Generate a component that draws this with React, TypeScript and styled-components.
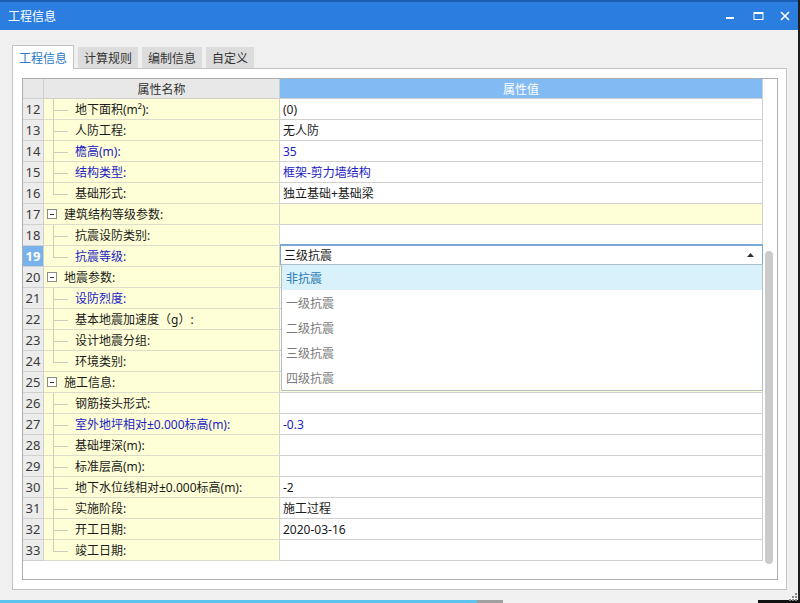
import styled, { createGlobalStyle } from "styled-components";

type Row = {
  no: number;
  label: string;
  value?: string;
  blue?: boolean;
  group?: boolean;
  last?: boolean;
  combo?: boolean;
};

const rows: Row[] = [
  { no: 12, label: "地下面积(m²):", value: "(0)" },
  { no: 13, label: "人防工程:", value: "无人防" },
  { no: 14, label: "檐高(m):", value: "35", blue: true },
  { no: 15, label: "结构类型:", value: "框架-剪力墙结构", blue: true },
  { no: 16, label: "基础形式:", value: "独立基础+基础梁", last: true },
  { no: 17, label: "建筑结构等级参数:", group: true },
  { no: 18, label: "抗震设防类别:" },
  { no: 19, label: "抗震等级:", blue: true, last: true, combo: true },
  { no: 20, label: "地震参数:", group: true },
  { no: 21, label: "设防烈度:", blue: true },
  { no: 22, label: "基本地震加速度（g）:" },
  { no: 23, label: "设计地震分组:" },
  { no: 24, label: "环境类别:", last: true },
  { no: 25, label: "施工信息:", group: true },
  { no: 26, label: "钢筋接头形式:" },
  { no: 27, label: "室外地坪相对±0.000标高(m):", value: "-0.3", blue: true },
  { no: 28, label: "基础埋深(m):" },
  { no: 29, label: "标准层高(m):" },
  { no: 30, label: "地下水位线相对±0.000标高(m):", value: "-2" },
  { no: 31, label: "实施阶段:", value: "施工过程" },
  { no: 32, label: "开工日期:", value: "2020-03-16" },
  { no: 33, label: "竣工日期:", last: true },
];

const options = ["非抗震", "一级抗震", "二级抗震", "三级抗震", "四级抗震"];
const tabs = ["工程信息", "计算规则", "编制信息", "自定义"];

const GlobalStyle = createGlobalStyle`
  html, body {
    margin: 0;
    padding: 0;
    background: #1e1e1e;
  }
  body {
    font-family: "Noto Sans", "Noto Sans CJK SC", sans-serif;
    font-size: 12px;
    color: #1a1a1a;
  }
  * {
    box-sizing: border-box;
  }
`;

const App = () => {
  return (
    <>
      <GlobalStyle />
      <Screen>
        <Window>
          <TitleBar>
            <Title>工程信息</Title>
            <Controls>
              <CtrlButton $w={28}>
                <svg width="10" height="10" viewBox="0 0 10 10">
                  <rect x="1" y="6" width="8" height="2" fill="#fff" />
                </svg>
              </CtrlButton>
              <CtrlButton $w={28}>
                <svg width="11" height="10" viewBox="0 0 11 10">
                  <rect x="1" y="1.5" width="9" height="7" fill="none" stroke="#fff" strokeWidth="1" />
                  <rect x="1" y="1" width="9" height="2" fill="#fff" />
                </svg>
              </CtrlButton>
              <CtrlButton $w={26}>
                <svg width="10" height="10" viewBox="0 0 10 10">
                  <path d="M1 1 L9 9 M9 1 L1 9" stroke="#fff" strokeWidth="1.6" />
                </svg>
              </CtrlButton>
            </Controls>
          </TitleBar>
          <Body>
            <TabStrip>
              {tabs.map((t, i) => (
                <Tab key={t} $active={i === 0}>
                  {t}
                </Tab>
              ))}
            </TabStrip>
            <Panel>
              <Grid>
                <Table>
                  <HeadCell />
                  <HeadCell>属性名称</HeadCell>
                  <HeadCell $blue>属性值</HeadCell>
                  {rows.map((r) => (
                    <RowView key={r.no} row={r} />
                  ))}
                </Table>
                <ScrollTrack>
                  <Thumb />
                </ScrollTrack>
              </Grid>
            </Panel>
          </Body>
          <Grip>
            <svg width="10" height="10" viewBox="0 0 10 10">
              {[
                [8, 0],
                [5, 3],
                [8, 3],
                [2, 6],
                [5, 6],
                [8, 6],
              ].map(([x, y]) => (
                <rect key={`${x}-${y}`} x={x} y={y + 2} width="2" height="2" fill="#8a8a8a" />
              ))}
            </svg>
          </Grip>
        </Window>
        <BottomEdge />
      </Screen>
    </>
  );
};

const RowView = ({ row }: { row: Row }) => {
  return (
    <>
      <NumCell $active={row.combo}>{row.no}</NumCell>
      <NameCell>
        {row.group ? <MinusBox /> : <Branch $last={row.last} />}
        <Label $blue={row.blue}>{row.label}</Label>
      </NameCell>
      <ValueCell $group={row.group} $blue={row.blue}>
        {row.combo ? (
          <Combo>
            <ComboText>三级抗震</ComboText>
            <svg width="7" height="4" viewBox="0 0 7 4">
              <path d="M0 4 L3.5 0 L7 4 Z" fill="#333" />
            </svg>
            <DropList>
              {options.map((o, i) => (
                <Option key={o} $selected={i === 0}>
                  {o}
                </Option>
              ))}
            </DropList>
          </Combo>
        ) : (
          row.value
        )}
      </ValueCell>
    </>
  );
};

const Screen = styled.div`
  width: 800px;
  height: 603px;
  display: flex;
  flex-direction: column;
  overflow: hidden;
`;

const Window = styled.div`
  position: relative;
  width: 798px;
  height: 600px;
  background: #f0f0f0;
  display: flex;
  flex-direction: column;
`;

const TitleBar = styled.div`
  height: 30px;
  flex: none;
  border-top: 2px solid #1c5db4;
  background: #2b7ee0;
  display: flex;
  align-items: center;
  padding-left: 8px;
`;

const Title = styled.div`
  color: #fff;
  font-size: 12px;
  flex: 1;
`;

const Controls = styled.div`
  display: flex;
  height: 100%;
`;

const CtrlButton = styled.div<{ $w: number }>`
  width: ${(p) => p.$w}px;
  display: flex;
  align-items: center;
  justify-content: center;
`;

const Body = styled.div`
  flex: 1;
  display: flex;
  flex-direction: column;
  padding: 15px 11px 10px 12px;
`;

const TabStrip = styled.div`
  display: flex;
  align-items: flex-end;
  gap: 4px;
  height: 24px;
  position: relative;
  z-index: 1;
  margin-bottom: -1px;
`;

const Tab = styled.div<{ $active?: boolean }>`
  height: ${(p) => (p.$active ? "24px" : "21px")};
  padding: 0 ${(p) => (p.$active ? "6px" : "5px")};
  margin-bottom: ${(p) => (p.$active ? "0" : "1px")};
  display: flex;
  align-items: center;
  font-size: 12px;
  color: ${(p) => (p.$active ? "#2a78c8" : "#333")};
  background: ${(p) => (p.$active ? "#fff" : "#dcdcdc")};
  border: 1px solid ${(p) => (p.$active ? "#c4c4c4" : "transparent")};
  border-bottom: none;
`;

const Panel = styled.div`
  flex: 1;
  display: flex;
  background: #fff;
  border: 1px solid #c4c4c4;
  padding: 9px 8px 9px 9px;
`;

const Grid = styled.div`
  flex: 1;
  display: flex;
  border: 1px solid #adadad;
  background: #fff;
`;

const Table = styled.div`
  width: 740px;
  display: grid;
  grid-template-columns: 21px 236px 483px;
  grid-template-rows: 20px;
  grid-auto-rows: 21px;
  align-content: start;
`;

const HeadCell = styled.div<{ $blue?: boolean }>`
  display: flex;
  align-items: center;
  justify-content: center;
  background: ${(p) => (p.$blue ? "#82baf3" : "#e8e8e8")};
  color: ${(p) => (p.$blue ? "#fff" : "#333")};
  border-right: 1px solid #cfcfcf;
  border-bottom: 1px solid #cfcfcf;
  font-size: 12px;
`;

const NumCell = styled.div<{ $active?: boolean }>`
  display: flex;
  align-items: center;
  justify-content: center;
  font-family: "Noto Sans", sans-serif;
  font-size: 13px;
  font-weight: ${(p) => (p.$active ? 700 : 400)};
  color: ${(p) => (p.$active ? "#fff" : "#3a3a3a")};
  background: ${(p) => (p.$active ? "#78b2ec" : "#ececec")};
  border-right: 1px solid #d0d0d0;
  border-bottom: 1px solid #d0d0d0;
`;

const NameCell = styled.div`
  display: flex;
  align-items: center;
  background: #ffffd7;
  border-right: 1px solid #d6d6c4;
  border-bottom: 1px solid #dcdccb;
  white-space: nowrap;
`;

const Branch = styled.span<{ $last?: boolean }>`
  position: relative;
  align-self: stretch;
  width: 31px;
  flex: none;
  margin-bottom: -1px;
  &::before {
    content: "";
    position: absolute;
    left: 9px;
    top: 0;
    bottom: ${(p) => (p.$last ? "50%" : "0")};
    border-left: 1px solid #cdcdc0;
  }
  &::after {
    content: "";
    position: absolute;
    left: 9px;
    top: 50%;
    width: 15px;
    border-top: 1px solid #cdcdc0;
  }
`;

const MinusBox = styled.span`
  position: relative;
  width: 10px;
  height: 10px;
  flex: none;
  margin: 0 7px 0 3px;
  border: 1px solid #8c8c8c;
  background: #fff;
  &::after {
    content: "";
    position: absolute;
    left: 2px;
    right: 2px;
    top: 3.5px;
    border-top: 1px solid #333;
  }
`;

const Label = styled.span<{ $blue?: boolean }>`
  color: ${(p) => (p.$blue ? "#2121c4" : "#1a1a1a")};
`;

const ValueCell = styled.div<{ $group?: boolean; $blue?: boolean }>`
  position: relative;
  display: flex;
  align-items: center;
  padding-left: 3px;
  background: ${(p) => (p.$group ? "#ffffd7" : "#fff")};
  color: ${(p) => (p.$blue ? "#2121c4" : "#1a1a1a")};
  border-right: 1px solid #d0d0d0;
  border-bottom: 1px solid #d0d0d0;
  white-space: nowrap;
`;

const Combo = styled.div`
  position: absolute;
  left: 0;
  right: -1px;
  top: -2px;
  bottom: 1px;
  display: flex;
  align-items: center;
  justify-content: space-between;
  padding: 0 8px 0 3px;
  background: #fff;
  border: 1px solid #7ca8d6;
  border-top-width: 2px;
  z-index: 2;
`;

const ComboText = styled.span`
  color: #1a1a1a;
`;

const DropList = styled.div`
  position: absolute;
  top: 100%;
  left: 0;
  right: -1px;
  background: #fff;
  border: 1px solid #aebfc6;
  display: flex;
  flex-direction: column;
`;

const Option = styled.div<{ $selected?: boolean }>`
  height: 25px;
  display: flex;
  align-items: center;
  padding-left: 4px;
  background: ${(p) => (p.$selected ? "#d9f1fa" : "#fff")};
  color: ${(p) => (p.$selected ? "#2a7ab5" : "#7a7a7a")};
`;

const ScrollTrack = styled.div`
  flex: 1;
  position: relative;
  padding: 172px 0 0 2px;
`;

const Thumb = styled.div`
  width: 8px;
  height: 313px;
  border-radius: 4px;
  background: #cbcbcb;
`;

const Grip = styled.div`
  position: absolute;
  right: 1px;
  bottom: 0;
  width: 10px;
  height: 12px;
`;

const BottomEdge = styled.div`
  height: 3px;
  flex: none;
  background: linear-gradient(
    90deg,
    #5cc3ee 0,
    #5cc3ee 477px,
    #a0a0a0 477px,
    #a0a0a0 503px,
    #f2f2f2 503px,
    #f2f2f2 758px,
    #111 758px
  );
`;

export default App;
